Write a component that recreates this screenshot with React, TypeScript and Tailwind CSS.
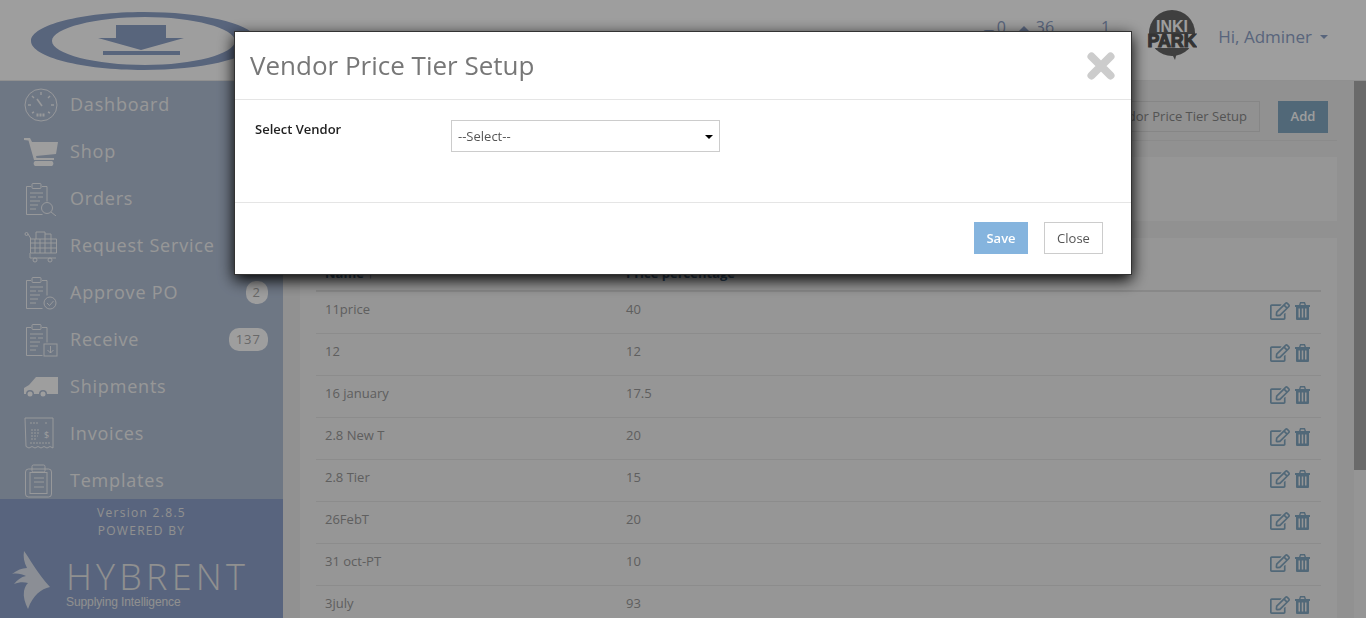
import { FaRegEdit } from 'react-icons/fa';

const rows = [
  { name: '11price', price: '40' },
  { name: '12', price: '12' },
  { name: '16 january', price: '17.5' },
  { name: '2.8 New T', price: '20' },
  { name: '2.8 Tier', price: '15' },
  { name: '26FebT', price: '20' },
  { name: '31 oct-PT', price: '10' },
  { name: '3july', price: '93' },
];

function Clipboard({ children }: { children?: React.ReactNode }) {
  return (
    <svg viewBox="0 0 34 34" className="w-[34px] h-[34px]" fill="none" stroke="#fff" strokeWidth="1" strokeOpacity="0.85">
      <path d="M7 4.500H2.500v28h16M18 4.500h5v15" />
      <rect x="8" y="1.500" width="9" height="5" rx="1" />
      <path d="M6 11h13M6 15h6M14 15h5M6 19h10M6 23h8M6 27h6" />
      {children}
    </svg>
  );
}

function DashboardIcon() {
  return (
    <svg viewBox="0 0 34 34" className="w-[34px] h-[34px]" fill="none" stroke="#fff" strokeWidth="1" strokeOpacity="0.85">
      <circle cx="17" cy="17" r="16" />
      <path d="M17 4v3M8 8l2 2M26 8l-2 2M4 17h3M30 17h-3M8 25l2-1M26 25l-2-1" strokeWidth="1.4" />
      <path d="M13 11l5 7" strokeWidth="1.6" />
      <path d="M12.500 27h9" strokeWidth="3" strokeDasharray="2 1" />
    </svg>
  );
}

function CartIcon() {
  return (
    <svg viewBox="0 0 34 28" className="w-[34px] h-[28px]" fill="#fff">
      <path d="M0 0h6l2 4h26l-2 12-20 2 .5 2H30v2H10L4.500 2.500 0 2z" />
      <path d="M11 23h17a3 3 0 0 1 0 5H11a3 3 0 0 1 0-5z" />
    </svg>
  );
}

function ServiceIcon() {
  return (
    <svg viewBox="0 0 34 34" className="w-[34px] h-[34px]" fill="none" stroke="#fff" strokeWidth="1" strokeOpacity="0.85">
      <circle cx="2.500" cy="5" r="1.500" />
      <path d="M4 5l2.500 4v15h26V10H6.500M6.500 14h26M6.500 19h26M11 10v14M16 10v14M21 10v14M27 10v14M6 24v5h26" />
      <path d="M12 10V3h9v7M21 5h6v5" />
      <circle cx="11" cy="31" r="2" />
      <circle cx="26" cy="31" r="2" />
    </svg>
  );
}

function TruckIcon() {
  return (
    <svg viewBox="0 0 34 20" className="w-[34px] h-[20px]" fill="#fff">
      <path d="M12 0h22v17H23a4 4 0 0 0-8 0H10a4 4 0 0 0-8 0H0v-6l5-3z" />
      <circle cx="6" cy="17" r="2.500" />
      <circle cx="19" cy="17" r="2.500" />
    </svg>
  );
}

function InvoiceIcon() {
  return (
    <svg viewBox="0 0 30 34" className="w-[30px] h-[34px]" fill="none" stroke="#fff" strokeWidth="1" strokeOpacity="0.85">
      <path d="M1 1h28v30l-3-1.500-3 1.500-3-1.500-3 1.500-3-1.500-3 1.500-3-1.500-3 1.500-3-1.500z" />
      <path d="M6 6h8M21 6h3M7 13h9M7 16h9M7 19h7M7 22h5M6 26h20" strokeDasharray="2 1" />
      <text x="20" y="21" fontSize="9" fill="#fff" stroke="none" fontFamily="'Open Sans', sans-serif">$</text>
    </svg>
  );
}

function TemplateIcon() {
  return (
    <svg viewBox="0 0 30 34" className="w-[30px] h-[34px]" fill="none" stroke="#fff" strokeWidth="1" strokeOpacity="0.85">
      <rect x="1.500" y="5" width="26" height="28" rx="3" />
      <rect x="6" y="8.500" width="17" height="21" />
      <rect x="8" y="1" width="13" height="7" rx="1.500" />
      <path d="M10 14h10M10 18h10M10 23h10" />
    </svg>
  );
}

const navItems = [
  { label: 'Dashboard', icon: <DashboardIcon /> },
  { label: 'Shop', icon: <CartIcon /> },
  {
    label: 'Orders',
    icon: (
      <Clipboard>
        <circle cx="23" cy="26" r="5.500" />
        <path d="M27 30l5 4" />
      </Clipboard>
    ),
  },
  { label: 'Request Service', icon: <ServiceIcon /> },
  {
    label: 'Approve PO',
    badge: '2',
    icon: (
      <Clipboard>
        <circle cx="26" cy="27" r="6" />
        <path d="M23 27l2.500 2.500 4-4.500" />
      </Clipboard>
    ),
  },
  {
    label: 'Receive',
    badge: '137',
    icon: (
      <Clipboard>
        <rect x="20" y="21" width="13" height="12" />
        <path d="M26.500 23v7M23.500 27l3 3 3-3" />
      </Clipboard>
    ),
  },
  { label: 'Shipments', icon: <TruckIcon /> },
  { label: 'Invoices', icon: <InvoiceIcon /> },
  { label: 'Templates', icon: <TemplateIcon /> },
];

function Logo() {
  return (
    <svg viewBox="0 0 226 58" className="w-[226px] h-[58px]">
      <path
        fillRule="evenodd"
        fill="#8fa3c9"
        d="M113 0c62 0 113 13 113 29s-51 29-113 29S0 45 0 29 51 0 113 0zM114 5C65 5 21 16 21 29s44 24 93 24c48 0 90-11 90-24S162 5 114 5z"
      />
      <path fill="#8fa3c9" d="M85 13h50v13h18l-43 12-43-12h18zM72 39h77v4H72z" />
    </svg>
  );
}

function Band() {
  return (
    <svg viewBox="0 0 50 50" className="w-[50px] h-[50px]">
      <circle cx="25" cy="23" r="23" fill="#666" />
      <text x="25" y="22" textAnchor="middle" fontSize="17" fontWeight="700" fill="#fff" fontFamily="'Liberation Sans', sans-serif" textLength="32" lengthAdjust="spacingAndGlyphs">INKI</text>
      <rect x="0" y="24" width="50" height="14" rx="3" fill="#fff" />
      <text x="25" y="37" textAnchor="middle" fontSize="18" fontWeight="700" fill="#555" stroke="#555" strokeWidth="1.200" fontFamily="'Liberation Sans', sans-serif" textLength="49" lengthAdjust="spacingAndGlyphs">PARK</text>
      <path d="M22 38l9 0-3 12z" fill="#666" />
    </svg>
  );
}

function TrashIcon() {
  return (
    <svg viewBox="0 0 15 18" className="h-[18px] w-[15px]" fill="#84a8c2" fillRule="evenodd">
      <path d="M0 3h15v2h-1v12a1 1 0 0 1-1 1H2a1 1 0 0 1-1-1V5H0zM3.500 6.500v9h1.500v-9zM6.750 6.500v9h1.500v-9zM10 6.500v9h1.500v-9z" />
      <path d="M4 3l1-3h5l1 3H9.500L9 1.500H6L5.500 3z" />
    </svg>
  );
}

export default function App() {
  return (
    <div className="relative h-[618px] w-[1366px] overflow-hidden bg-[#ebebeb] font-['Open_Sans',sans-serif]">
      {/* Page behind the modal */}
      <div className="flex h-[81px] items-center justify-end border-b border-[#e8e8e8] bg-white pr-[38px]">
        <div className="mr-auto pl-[31px] pt-[2px]">
          <Logo />
        </div>
        <div className="relative mb-[26px] mr-[37px] flex items-start text-[16px] leading-[20px] text-[#8fa3c9]">
          <span className="absolute left-[-14px] top-[13px] h-[6px] w-[12px] rounded-full bg-[#8fa3c9]" />
          <span className="ml-0">0</span>
          <span className="absolute left-[20px] top-[9px] h-0 w-0 border-x-[7px] border-b-[7px] border-x-transparent border-b-[#8fa3c9]" />
          <span className="ml-[30px]">36</span>
          <span className="absolute left-[73px] top-[14px] h-[4px] w-[20px] bg-[#8fa3c9]" />
          <span className="ml-[47px]">1</span>
        </div>
        <div className="mb-[10px] mr-[21px]">
          <Band />
        </div>
        <div className="flex items-center gap-[8px] pb-[6px] text-[17px] text-[#8fa3c9]">
          Hi, Adminer
          <span className="h-0 w-0 border-x-[4px] border-t-[4px] border-x-transparent border-t-[#8fa3c9]" />
        </div>
      </div>

      <div className="flex h-[537px]">
        <aside className="flex w-[283px] shrink-0 flex-col bg-[#b2c0d6]">
          <nav className="h-[418px] overflow-hidden">
            {navItems.map((item) => (
              <div key={item.label} className="flex h-[47px] items-center pl-[24px] pr-[15px]">
                <div className="flex w-[46px] shrink-0 justify-start">{item.icon}</div>
                <span className="flex-1 text-[18px] tracking-[0.8px] text-[#f4f4f4]">{item.label}</span>
                {item.badge && (
                  <span className="rounded-[10px] bg-white px-[7px] py-[2px] text-[13px] tracking-[1px] text-[#aaa]">{item.badge}</span>
                )}
              </div>
            ))}
          </nav>
          <div className="flex flex-1 flex-col items-center bg-[#8ea2cb] pt-[5px] text-[#e8e8e8]">
            <span className="text-[12px] leading-[18px] tracking-[1.3px]">Version 2.8.5</span>
            <span className="text-[12px] leading-[18px] tracking-[1.3px]">POWERED BY</span>
            <div className="mt-[11px] flex w-full pl-[11px]">
              <svg viewBox="0 0 40 58" className="h-[58px] w-[40px]" fill="#e0e6f0">
                <path d="M13 0c6 8 13 22 26 36-9 2-17 8-22 22-3-6-5-12-4-18 1-4 2-6 4-8-4-1-9-1-14 1 3-4 7-7 12-8-4-2-9-3-14-2 5-4 10-6 15-6-3-6-4-11-3-17z" />
              </svg>
              <div className="ml-[15px] flex flex-col pt-[10px]">
                <span className="text-[36px] font-light leading-[32px] tracking-[4.200px]">HYBRENT</span>
                <span className="mt-[3px] font-['Liberation_Sans',sans-serif] text-[12px] leading-[12px] tracking-[-0.1px]">Supplying Intelligence</span>
              </div>
            </div>
          </div>
        </aside>

        <main className="flex-1 overflow-hidden px-[17px]">
          <div className="flex h-[60px] items-start justify-end gap-[18px] border-b border-[#e0e0e0] pr-[9px] pt-[20px]">
            <button className="flex h-[31px] items-center border border-[#d8d8d8] px-[12px] text-[13px] text-[#888]">Vendor Price Tier Setup</button>
            <button className="flex h-[32px] w-[50px] items-center justify-center bg-[#84a8c2] text-[13px] font-semibold text-white">Add</button>
          </div>
          <div className="mt-[16px] h-[64px] bg-[#f2f2f2]" />
          <div className="mt-[17px] bg-[#f2f2f2] px-[16px] pt-[26px]">
            <div className="flex h-[28px] border-b-2 border-[#dcdcdc] px-[9px] text-[13px] font-bold text-[#4a6a8a]">
              <span className="w-[301px]">Name ↑</span>
              <span>Price percentage</span>
            </div>
            {rows.map((r) => (
              <div key={r.name} className="flex h-[42px] items-center border-b border-[#e2e2e2] px-[8px] pb-[5px] pl-[9px] text-[13px] text-[#999]">
                <span className="w-[301px]">{r.name}</span>
                <span className="flex-1">{r.price}</span>
                <div className="flex items-center gap-[5px] pb-[0px] pr-[3px] pt-[1px] text-[#84a8c2]">
                  <FaRegEdit className="h-[18px] w-[20px]" />
                  <TrashIcon />
                </div>
              </div>
            ))}
          </div>
        </main>

        <div className="w-[12px] shrink-0 bg-[#f1f1f1]">
          <div className="h-[389px] bg-[#acacac]" />
        </div>
      </div>

      {/* Modal */}
      <div className="fixed inset-0 flex justify-center bg-black/[0.38] pt-[31px]">
        <div className="h-[244px] w-[898px] border border-[#333] bg-white shadow-[0_5px_15px_rgba(0,0,0,1)]">
          <div className="flex h-[68px] items-center justify-between border-b border-[#e5e5e5] pl-[15px] pr-[16px]">
            <h4 className="text-[26px] text-[#777]">Vendor Price Tier Setup</h4>
            <svg viewBox="0 0 28 28" className="h-[28px] w-[28px]" stroke="#ccc" strokeWidth="8" strokeLinecap="round">
              <path d="M4.500 4.500l19 19M23.500 4.500l-19 19" />
            </svg>
          </div>
          <div className="flex h-[103px] border-b border-[#e5e5e5] pl-[20px] pt-[20px]">
            <label className="w-[196px] text-[13px] font-semibold leading-[18px] text-[#222]">Select Vendor</label>
            <div className="flex h-[32px] w-[269px] items-center justify-between border border-[#ccc] pl-[6px] pr-[6px] pt-[1px] text-[13px] text-[#555]">
              --Select--
              <span className="h-0 w-0 border-x-[4px] border-t-[4px] border-x-transparent border-t-black" />
            </div>
          </div>
          <div className="flex justify-end gap-[16px] pr-[28px] pt-[19px]">
            <button className="h-[32px] w-[54px] bg-[#85b4de] pt-[1px] text-[13px] font-semibold text-white">Save</button>
            <button className="h-[32px] w-[59px] border border-[#ccc] bg-white pt-[1px] text-[13px] text-[#555]">Close</button>
          </div>
        </div>
      </div>
    </div>
  );
}
